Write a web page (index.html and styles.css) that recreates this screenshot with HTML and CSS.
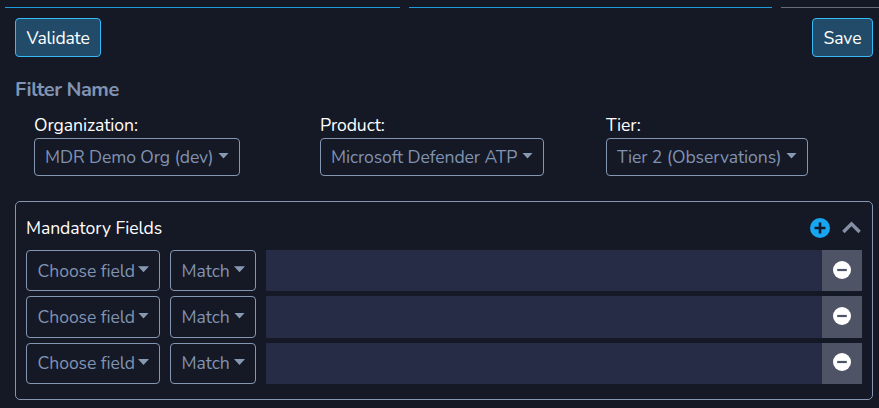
FILE: index.html
```html
<!DOCTYPE html>
<html lang="en">
<head>
<meta charset="utf-8">
<title>Filter</title>
<link rel="stylesheet" href="styles.css">
</head>
<body>
<div class="steps"><i class="step done first"></i><i class="step done second"></i><i class="step"></i></div>
<main>
  <div class="actions">
    <button class="btn primary validate"><span>Validate</span></button>
    <button class="btn primary save"><span>Save</span></button>
  </div>
  <h2>Filter Name</h2>
  <div class="filters">
    <div class="filter"><label>Organization:</label><button class="btn select org"><span>MDR Demo Org (dev)</span><i class="caret"></i></button></div>
    <div class="filter"><label>Product:</label><button class="btn select product"><span>Microsoft Defender ATP</span><i class="caret"></i></button></div>
    <div class="filter"><label>Tier:</label><button class="btn select tier"><span>Tier 2 (Observations)</span><i class="caret"></i></button></div>
  </div>
  <section class="panel">
    <header>
      <span class="title">Mandatory Fields</span>
      <svg class="plus" viewBox="0 0 20 20"><circle cx="10" cy="10" r="10"/><path d="M10 4.500v11M4.500 10h11"/></svg>
      <svg class="chevron" viewBox="0 0 18 12"><path d="M1.300 10.300 9 2.600l7.700 7.700"/></svg>
    </header>
    <div class="rows">
      <div class="row"><button class="btn select choose"><span>Choose field</span><i class="caret"></i></button><button class="btn select match"><span>Match</span><i class="caret"></i></button><div class="input"></div><button class="remove"><svg viewBox="0 0 18 18"><circle cx="9" cy="9" r="9"/><path d="M4.200 9h9.600"/></svg></button></div>
      <div class="row"><button class="btn select choose"><span>Choose field</span><i class="caret"></i></button><button class="btn select match"><span>Match</span><i class="caret"></i></button><div class="input"></div><button class="remove"><svg viewBox="0 0 18 18"><circle cx="9" cy="9" r="9"/><path d="M4.200 9h9.600"/></svg></button></div>
      <div class="row"><button class="btn select choose"><span>Choose field</span><i class="caret"></i></button><button class="btn select match"><span>Match</span><i class="caret"></i></button><div class="input"></div><button class="remove"><svg viewBox="0 0 18 18"><circle cx="9" cy="9" r="9"/><path d="M4.200 9h9.600"/></svg></button></div>
    </div>
  </section>
</main>
</body>
</html>
```
FILE: styles.css
```css
* { box-sizing: border-box; }
body { margin: 0; height: 408px; overflow: hidden; background: #151825; color: #fff; font: 17.6px/24px Nunito, Lato, "Open Sans", sans-serif; letter-spacing: -0.08px; }
.steps { display: flex; gap: 9px; padding: 7px 0 0 5px; }
.step { flex: 1; height: 1px; background: #6b6b78; }
.done { background: #1f9bde; }
.first { flex: 0 0 395px; }
.second { flex: 0 0 363px; }
main { padding: 10px 6px 0 15px; }
.actions { display: flex; justify-content: space-between; }
.btn { display: flex; align-items: center; height: 38px; margin: 0; padding: 0 10px; border: 1px solid #8496b0; border-radius: 4px; background: transparent; color: #8093b2; font: inherit; letter-spacing: -0.1px; white-space: nowrap; }
.primary { height: 39px; padding-left: 10.5px; border-color: #35baf6; background: #214b69; color: #fff; }
.validate { width: 86px; letter-spacing: -0.2px; }
.save { width: 61px; }
.select { justify-content: space-between; }
.caret { width: 11px; height: 6px; margin-top: -3px; background: #8799b0; clip-path: polygon(0 0, 100% 0, 50% 100%); }
h2 { margin: 19px 0 0; color: #8093b2; font-size: 20px; line-height: 28px; font-weight: 700; letter-spacing: -0.5px; }
.filters { display: grid; grid-template-columns: repeat(3, 286px); padding: 9px 0 0 19px; }
label { display: block; height: 25px; }
.org { width: 206px; }
.product { width: 224px; }
.tier { width: 202px; }
.panel { height: 199px; margin-top: 25px; padding: 13px 10px 0; border: 1px solid #8496b0; border-radius: 5px; }
header { display: flex; align-items: center; height: 25px; margin-bottom: 10px; }
.title { margin-right: auto; }
.plus { width: 20px; height: 20px; margin-right: 12px; fill: #16a6f2; stroke: #151825; stroke-width: 2.6; }
.plus circle { stroke: none; }
.chevron { width: 19px; height: 13px; margin-right: 1px; fill: none; stroke: #8590a5; stroke-width: 3.2; }
.rows { display: grid; gap: 5px; }
.row { display: flex; height: 41.400px; }
.row .btn { height: 100%; margin-right: 10px; }
.row .select { padding-left: 10.6px; }
.choose { width: 134px; }
.match { width: 86px; }
.input { flex: 1; background: #272c46; }
.remove { display: flex; align-items: center; justify-content: center; width: 40px; padding: 0 0 2px; border: 0; background: #4f5366; }
.remove svg { width: 18px; height: 18px; fill: #fff; stroke: #4f5366; stroke-width: 2.200; }
.remove circle { stroke: none; }
```
